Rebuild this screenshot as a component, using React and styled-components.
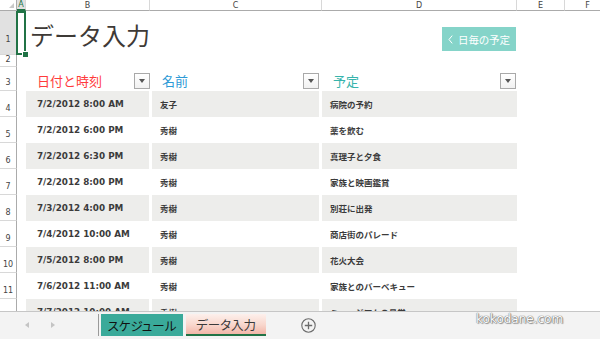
import React from "react";
import styled, { createGlobalStyle } from "styled-components";

const GlobalStyle = createGlobalStyle`
  html, body { margin: 0; padding: 0; background: #fff; }
  body { overflow: hidden; font-family: "Liberation Sans", "Noto Sans CJK JP", sans-serif; }
`;

const JP = `"Noto Sans CJK JP", "Liberation Sans", sans-serif`;

const Frame = styled.div`
  position: relative;
  width: 600px;
  height: 339px;
  overflow: hidden;
  background: #fff;
`;

const Sheet = styled.div`
  display: grid;
  grid-template-columns: 17px 9px 124px 172px 195px 48px 46px;
  grid-template-rows: 11px 44px 12px 24px repeat(9, 26px);
  height: 311px;
  width: 611px;
  overflow: hidden;
`;

const Corner = styled.div`
  position: relative;
  border-right: 1px solid #ababab;
  border-bottom: 1px solid #ababab;
  background: #fff;
  &::after {
    content: "";
    position: absolute;
    right: 2px;
    bottom: 2px;
    border-left: 5px solid transparent;
    border-bottom: 5px solid #c8c8c8;
  }
`;

const ColHead = styled.div`
  display: flex;
  align-items: center;
  justify-content: center;
  font-family: "DejaVu Sans", sans-serif;
  font-size: 8px;
  color: ${(p) => (p.$sel ? "#217346" : "#444")};
  background: ${(p) => (p.$sel ? "#e1e1e1" : "#fff")};
  border-right: 1px solid #d8d8d8;
  border-bottom: ${(p) => (p.$sel ? "2px solid #217346" : "1px solid #ababab")};
  box-sizing: border-box;
`;

const RowHead = styled.div`
  display: flex;
  align-items: flex-end;
  justify-content: center;
  padding-bottom: ${(p) => p.$pb ?? 1}px;
  box-sizing: border-box;
  font-family: "DejaVu Sans", sans-serif;
  font-size: 8px;
  line-height: 10px;
  color: #444;
  background: ${(p) => (p.$sel ? "#e1e1e1" : "#fff")};
  border-right: 1px solid #ababab;
  border-bottom: 1px solid #d8d8d8;
  grid-column: 1;
`;

const Empty = styled.div`
  grid-column: ${(p) => p.$span || "auto"};
`;

const SelCell = styled.div`
  position: relative;
  margin-left: -1px;
  border: 2px solid #217346;
  box-sizing: border-box;
  &::after {
    content: "";
    position: absolute;
    right: -5px;
    bottom: -5px;
    width: 5px;
    height: 5px;
    background: #217346;
    border: 1px solid #fff;
  }
`;

const TitleCell = styled.div`
  display: flex;
  align-items: center;
  padding-left: 4px;
  padding-top: 3px;
  font-family: ${JP};
  font-size: 24px;
  color: #3e3a36;
  white-space: nowrap;
`;

const ButtonCell = styled.div`
  display: flex;
  align-items: flex-end;
  justify-content: flex-end;
  padding: 0 1px 4px 0;
`;

const DayButton = styled.div`
  display: flex;
  align-items: center;
  gap: 5px;
  width: 74px;
  height: 24px;
  box-sizing: border-box;
  padding-left: 6px;
  background: #85d4c9;
  color: #fff;
  font-family: ${JP};
  font-size: 10.5px;
  font-feature-settings: "palt";
`;

const Chevron = styled.svg`
  width: 5px;
  height: 9px;
`;

const HeadCell = styled.div`
  display: flex;
  align-items: center;
  justify-content: space-between;
  padding: 0 ${(p) => p.$r}px 0 ${(p) => p.$l}px;
  grid-column: ${(p) => p.$col};
`;

const HeadLabel = styled.span`
  padding-left: ${(p) => p.$pad}px;
  padding-top: 3px;
  font-family: ${JP};
  font-size: 13px;
  color: ${(p) => p.$color};
`;

const Drop = styled.div`
  width: 16px;
  height: 16px;
  box-sizing: border-box;
  border: 1px solid #a9a9a9;
  background: linear-gradient(#ffffff, #f1f1f1);
  display: flex;
  align-items: center;
  justify-content: center;
  margin-top: 4px;
  margin-right: ${(p) => p.$mr || 0}px;
  &::before {
    content: "";
    border-left: 3.5px solid transparent;
    border-right: 3.5px solid transparent;
    border-top: 4px solid #555;
  }
`;

const DataCell = styled.div`
  grid-column: ${(p) => p.$col};
  padding: 0 ${(p) => p.$r}px 0 ${(p) => p.$l}px;
  display: flex;
`;

const Bar = styled.div`
  flex: 1;
  display: flex;
  align-items: center;
  padding-left: ${(p) => p.$pad}px;
  background: ${(p) => (p.$shade ? "#ededeb" : "#fff")};
  font-weight: 700;
  color: #3b3b3b;
  white-space: nowrap;
  overflow: hidden;
  font-family: ${(p) => (p.$jp ? JP : `"DejaVu Sans", "Noto Sans CJK JP", sans-serif`)};
  font-size: ${(p) => (p.$jp ? "8.5px" : "8.8px")};
`;

const TabBar = styled.div`
  display: flex;
  align-items: flex-start;
  height: 28px;
  box-sizing: border-box;
  border-top: 1px solid #c6c6c6;
  background: #f3f3f3;
  padding-top: 2px;
`;

const NavArrows = styled.div`
  display: flex;
  align-items: center;
  gap: 22px;
  height: 22px;
  padding-left: 25px;
  width: 99px;
  box-sizing: border-box;
  border-right: 1px solid #9a9a9a;
`;

const Arrow = styled.span`
  width: 0;
  height: 0;
  border-top: 3.5px solid transparent;
  border-bottom: 3.5px solid transparent;
  ${(p) => (p.$left ? "border-right: 4px solid #c4c4c4;" : "border-left: 4px solid #c4c4c4;")}
`;

const Tab = styled.div`
  display: flex;
  align-items: center;
  justify-content: center;
  height: 22px;
  width: ${(p) => p.$w}px;
  margin-left: ${(p) => p.$ml}px;
  box-sizing: border-box;
  font-family: ${JP};
  font-size: 12.5px;
  font-feature-settings: "palt";
  color: ${(p) => (p.$active ? "#3a3a3a" : "#111")};
  background: ${(p) =>
    p.$active
      ? "linear-gradient(#fdf0ec 0%, #f8d6cc 55%, #f2b6a8 100%)"
      : "#3aaa9a"};
  border-bottom: ${(p) => (p.$active ? "2px solid #217346" : "none")};
`;

const AddSheet = styled.svg`
  width: 15px;
  height: 15px;
  margin-left: 35px;
  margin-top: 4px;
`;

const Watermark = styled.div`
  position: absolute;
  left: 476px;
  top: 312px;
  font-family: "DejaVu Sans", sans-serif;
  font-size: 12px;
  color: #fbfbfb;
  text-shadow: 0 0 1px #666, 0 0 1px #666, 1px 1px 1px #999;
`;

const cols = ["A", "B", "C", "D", "E", "F"];

const rows = [
  ["7/2/2012 8:00 AM", "友子", "病院の予約"],
  ["7/2/2012 6:00 PM", "秀樹", "薬を飲む"],
  ["7/2/2012 6:30 PM", "秀樹", "真理子と夕食"],
  ["7/2/2012 8:00 PM", "秀樹", "家族と映画鑑賞"],
  ["7/3/2012 4:00 PM", "秀樹", "別荘に出発"],
  ["7/4/2012 10:00 AM", "秀樹", "商店街のパレード"],
  ["7/5/2012 8:00 PM", "秀樹", "花火大会"],
  ["7/6/2012 11:00 AM", "秀樹", "家族とのバーベキュー"],
  ["7/7/2012 10:00 AM", "秀樹", "ミュージアムの見学"],
];

const colSpec = [
  { col: 3, l: 0, r: 1, hr: 0, mr: 0, pad: 11, headPad: 11, color: "#ff3b3b", label: "日付と時刻" },
  { col: 4, l: 2, r: 3, hr: 0, mr: 3, pad: 8, headPad: 10, color: "#2d9ad6", label: "名前", jp: true },
  { col: 5, l: 0, r: 0, hr: 1, mr: 0, pad: 8, headPad: 11, color: "#37b4ac", label: "予定", jp: true },
];

export default function App() {
  return (
    <>
      <GlobalStyle />
      <Frame>
        <Sheet>
          <Corner />
          {cols.map((c, i) => (
            <ColHead key={c} $sel={i === 0}>
              {c}
            </ColHead>
          ))}

          <RowHead $sel $pb={9}>1</RowHead>
          <SelCell />
          <TitleCell>データ入力</TitleCell>
          <Empty />
          <ButtonCell>
            <DayButton>
              <Chevron viewBox="0 0 5 9">
                <path d="M4.2 0.6 L1 4.5 L4.2 8.4" fill="none" stroke="#fff" strokeWidth="1" />
              </Chevron>
              日毎の予定
            </DayButton>
          </ButtonCell>
          <Empty />
          <Empty />

          <RowHead>2</RowHead>
          <Empty $span="2 / 8" />

          <RowHead $pb={2}>3</RowHead>
          {colSpec.map((s) => (
            <HeadCell key={s.col} $col={s.col} $l={s.l} $r={s.hr}>
              <HeadLabel $pad={s.headPad} $color={s.color}>
                {s.label}
              </HeadLabel>
              <Drop $mr={s.mr} />
            </HeadCell>
          ))}

          {rows.map((r, i) => (
            <React.Fragment key={i}>
              <RowHead $pb={2}>{i + 4}</RowHead>
              {colSpec.map((s, j) => (
                <DataCell key={s.col} $col={s.col} $l={s.l} $r={s.r}>
                  <Bar $shade={i % 2 === 0} $pad={s.pad} $jp={s.jp}>
                    {r[j]}
                  </Bar>
                </DataCell>
              ))}
            </React.Fragment>
          ))}
        </Sheet>

        <TabBar>
          <NavArrows>
            <Arrow $left />
            <Arrow />
          </NavArrows>
          <Tab $w={82} $ml={2}>スケジュール</Tab>
          <Tab $w={80} $ml={3} $active>
            データ入力
          </Tab>
          <AddSheet viewBox="0 0 15 15">
            <circle cx="7.5" cy="7.5" r="6.7" fill="none" stroke="#6b6b6b" strokeWidth="1.1" />
            <path d="M7.5 3.8 V11.2 M3.8 7.5 H11.2" stroke="#6b6b6b" strokeWidth="1.3" />
          </AddSheet>
        </TabBar>
        <Watermark>kokodane.com</Watermark>
      </Frame>
    </>
  );
}
